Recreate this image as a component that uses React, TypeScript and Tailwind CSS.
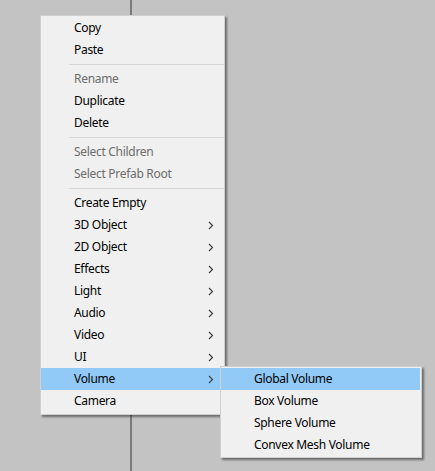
import { Fragment } from "react";

type Item = { label: string; disabled?: boolean; sub?: boolean; active?: boolean } | "sep";

const menuItems: Item[] = [
  { label: "Copy" },
  { label: "Paste" },
  "sep",
  { label: "Rename", disabled: true },
  { label: "Duplicate" },
  { label: "Delete" },
  "sep",
  { label: "Select Children", disabled: true },
  { label: "Select Prefab Root", disabled: true },
  "sep",
  { label: "Create Empty" },
  { label: "3D Object", sub: true },
  { label: "2D Object", sub: true },
  { label: "Effects", sub: true },
  { label: "Light", sub: true },
  { label: "Audio", sub: true },
  { label: "Video", sub: true },
  { label: "UI", sub: true },
  { label: "Volume", sub: true, active: true },
  { label: "Camera" },
];

const volumeItems = ["Global Volume", "Box Volume", "Sphere Volume", "Convex Mesh Volume"];

function Chevron() {
  return (
    <svg width="6" height="9" viewBox="0 0 6 9" className="mr-[10px]">
      <path d="M1 1 L4.5 4.5 L1 8" fill="none" stroke="#3a3a3a" strokeWidth="1.1" />
    </svg>
  );
}

function MenuRow({ item }: { item: Exclude<Item, "sep"> }) {
  return (
    <div
      className={`h-[22px] flex items-center justify-between pl-[33px] ${
        item.active ? "bg-[#91c9f7]" : ""
      }`}
    >
      <span className={item.disabled ? "text-[#6d6d6d]" : "text-[#000000]"}>{item.label}</span>
      {item.sub && <Chevron />}
    </div>
  );
}

export default function App() {
  return (
    <div
      className="relative w-[435px] h-[471px] bg-[#c3c3c3] flex overflow-hidden text-[12px] tracking-[-0.3px]"
      style={{ fontFamily: '"Noto Sans", "Open Sans", sans-serif' }}
    >
      <div className="w-[132px] h-full border-r-2 border-[#7b7b7b]" />

      {/* main context menu */}
      <div className="absolute left-[40px] top-[15px] w-[185px] bg-[#f0f0f0] border border-[#cfcfcf] pt-[1px] pb-[2px] shadow-[2px_2px_2px_rgba(0,0,0,0.45)]">
        {menuItems.map((item, i) =>
          item === "sep" ? (
            <div key={i} className="h-[7px] flex items-center pl-[28px]">
              <div className="h-px w-full bg-[#d7d7d7]" />
            </div>
          ) : (
            <Fragment key={i}>
              <MenuRow item={item} />
            </Fragment>
          )
        )}
      </div>

      {/* Volume submenu */}
      <div className="absolute left-[220px] top-[366px] w-[202px] bg-[#f0f0f0] border border-[#cfcfcf] pt-[1px] pb-[1px] shadow-[2px_2px_2px_rgba(0,0,0,0.45)]">
        {volumeItems.map((label, i) => (
          <div
            key={label}
            className={`h-[22px] flex items-center pl-[33px] text-[#000000] ${
              i === 0 ? "bg-[#91c9f7] mr-[1px]" : ""
            }`}
          >
            {label}
          </div>
        ))}
      </div>
    </div>
  );
}
